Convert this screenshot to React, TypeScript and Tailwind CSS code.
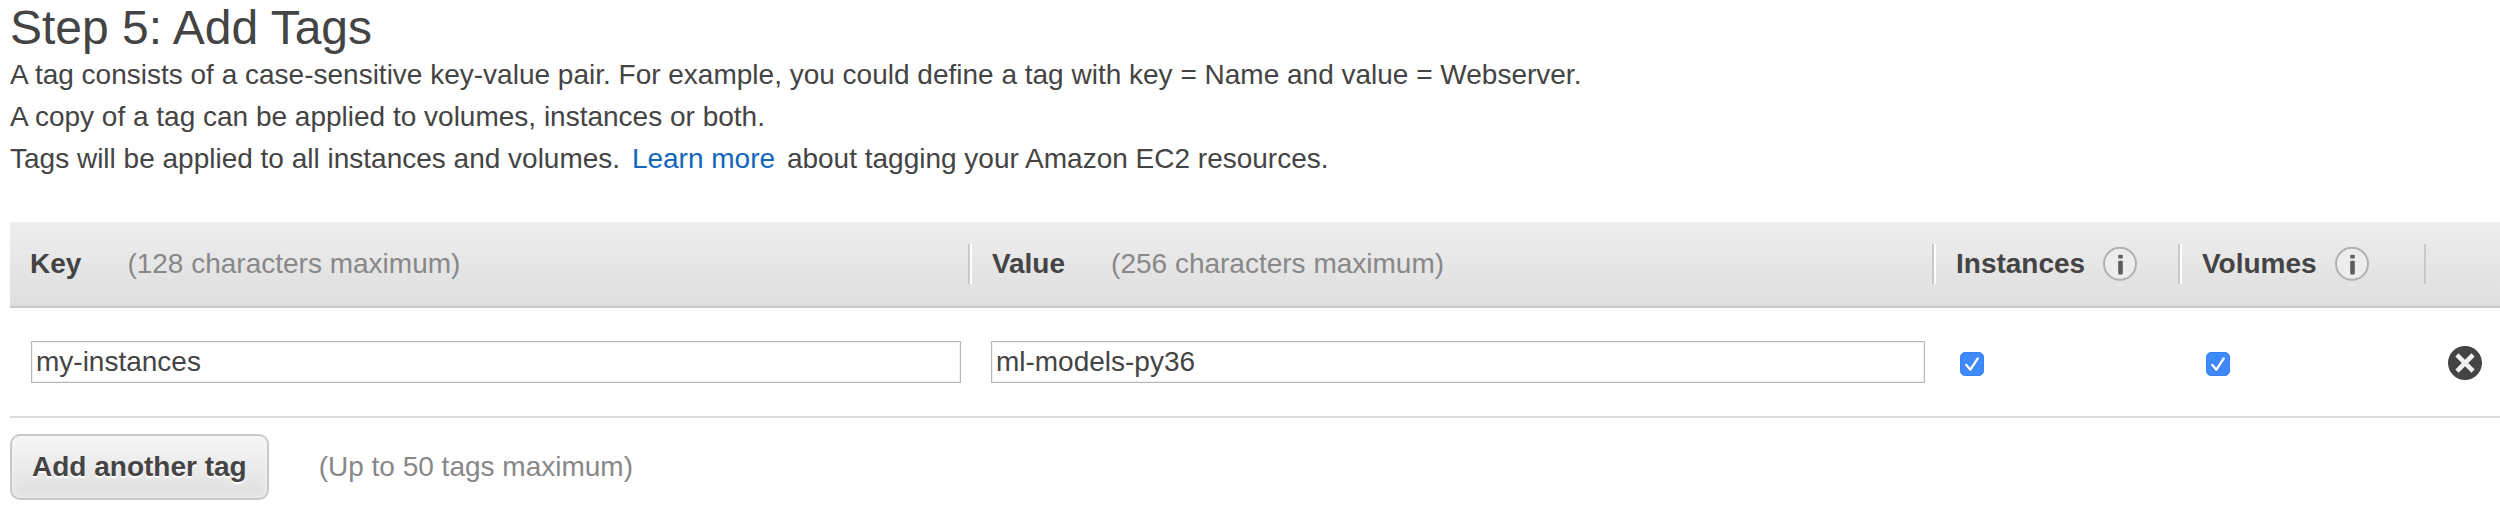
import { useState } from "react";

type Tag = { id: number; key: string; value: string; instances: boolean; volumes: boolean };

function InfoButton({ label }: { label: string }) {
  return (
    <button type="button" aria-label={label} className="shrink-0">
      <svg viewBox="0 0 34 34" className="block size-[34px]" aria-hidden="true">
        <circle cx="17" cy="16.8" r="16" fill="#ededed" stroke="#b0b0b0" strokeWidth="2" />
        <rect x="15.2" y="7.8" width="4.6" height="3.6" rx="1" fill="#606060" />
        <rect x="15.2" y="13.8" width="4.6" height="13.6" rx="1" fill="#5c5c5c" />
      </svg>
    </button>
  );
}

function CheckBox({ label, checked, onChange }: { label: string; checked: boolean; onChange: (on: boolean) => void }) {
  return (
    <label className="grid size-6 place-items-center">
      <input
        type="checkbox"
        aria-label={label}
        checked={checked}
        onChange={(e) => onChange(e.target.checked)}
        className="col-start-1 row-start-1 size-6 appearance-none rounded-[5px] border border-[#b5b5b5] bg-white checked:border-[#3a80f5] checked:bg-[#3f8afb]"
      />
      {checked && (
        <svg viewBox="0 0 24 24" className="pointer-events-none col-start-1 row-start-1 size-6" aria-hidden="true">
          <path d="M6.3 14 10.3 18.8 17.8 7.4" fill="none" stroke="#2f70da" strokeWidth="2.2" strokeLinecap="round" strokeLinejoin="round" />
          <path d="M6.3 13 10.3 17.8 17.8 6.4" fill="none" stroke="#fff" strokeWidth="2.4" strokeLinecap="round" strokeLinejoin="round" />
        </svg>
      )}
    </label>
  );
}

const fieldClass =
  "block h-[42px] w-full border border-[#b8b8b8] bg-white px-1 shadow-[inset_0_0_0_1px_#eeeeee] outline-none";

export default function App() {
  const [tags, setTags] = useState<Tag[]>([
    { id: 1, key: "my-instances", value: "ml-models-py36", instances: true, volumes: true },
  ]);
  const update = (id: number, patch: Partial<Tag>) =>
    setTags((all) => all.map((t) => (t.id === id ? { ...t, ...patch } : t)));
  const addTag = () =>
    setTags((all) => [...all, { id: Date.now(), key: "", value: "", instances: true, volumes: true }]);

  return (
    <main className="bg-white pt-0.5 pb-2.5 pl-2.5 font-['Liberation_Sans',Arial,sans-serif] text-[28px] leading-[42px] text-[#444]">
      <h1 className="text-[48px] leading-[52px]">Step 5: Add Tags</h1>
      <p>
        A tag consists of a case-sensitive key-value pair. For example, you could define a tag with key = Name and value
        = Webserver.
      </p>
      <p>A copy of a tag can be applied to volumes, instances or both.</p>
      <p>
        Tags will be applied to all instances and volumes.{" "}
        <a href="#learn-more" className="mx-1 text-[#1166bb]">
          Learn more
        </a>{" "}
        about tagging your Amazon EC2 resources.
      </p>

      <table className="mt-[42px] w-full table-fixed border-separate border-spacing-0 text-left">
        <colgroup>
          <col className="w-[38.55%]" />
          <col />
          <col className="w-[246px]" />
          <col className="w-[246px]" />
          <col className="w-[74px]" />
        </colgroup>
        <thead>
          <tr className="bg-linear-to-b from-[#eeeeee] to-[#dedede]">
            <th scope="col" className="border-b-2 border-[#c9c9c9] py-[22px] font-normal">
              <div className="flex h-10 items-center gap-[46px] border-r-2 border-[#c9c9c9] pl-5">
                <span className="font-bold">Key</span>
                <span className="text-[#888]">(128 characters maximum)</span>
              </div>
            </th>
            <th scope="col" className="border-b-2 border-[#c9c9c9] py-[22px] font-normal">
              <div className="flex h-10 items-center gap-[46px] border-r-2 border-l-2 border-r-[#c9c9c9] border-l-white pl-5">
                <span className="font-bold">Value</span>
                <span className="text-[#888]">(256 characters maximum)</span>
              </div>
            </th>
            <th scope="col" className="border-b-2 border-[#c9c9c9] py-[22px]">
              <div className="flex h-10 items-center gap-[18px] border-r-2 border-l-2 border-r-[#c9c9c9] border-l-white pl-5">
                <span>Instances</span>
                <InfoButton label="About instances" />
              </div>
            </th>
            <th scope="col" className="border-b-2 border-[#c9c9c9] py-[22px]">
              <div className="flex h-10 items-center gap-[18px] border-r-2 border-l-2 border-r-[#c9c9c9] border-l-white pl-5">
                <span>Volumes</span>
                <InfoButton label="About volumes" />
              </div>
            </th>
            <td className="border-b-2 border-[#c9c9c9]" />
          </tr>
        </thead>
        <tbody>
          {tags.map((tag) => (
            <tr key={tag.id} className="h-[110px]">
              <td className="border-b-2 border-[#dedede] pr-[9px] pl-[21px]">
                <input
                  type="text"
                  aria-label="Key"
                  maxLength={128}
                  value={tag.key}
                  onChange={(e) => update(tag.id, { key: e.target.value })}
                  className={fieldClass}
                />
              </td>
              <td className="border-b-2 border-[#dedede] pr-[9px] pl-[21px]">
                <input
                  type="text"
                  aria-label="Value"
                  maxLength={256}
                  value={tag.value}
                  onChange={(e) => update(tag.id, { value: e.target.value })}
                  className={fieldClass}
                />
              </td>
              <td className="border-b-2 border-[#dedede] pt-1 pl-[26px]">
                <CheckBox
                  label="Apply to instances"
                  checked={tag.instances}
                  onChange={(instances) => update(tag.id, { instances })}
                />
              </td>
              <td className="border-b-2 border-[#dedede] pt-1 pl-[26px]">
                <CheckBox
                  label="Apply to volumes"
                  checked={tag.volumes}
                  onChange={(volumes) => update(tag.id, { volumes })}
                />
              </td>
              <td className="border-b-2 border-[#dedede] pt-0.5 pl-[22px]">
                <button
                  type="button"
                  aria-label="Remove tag"
                  className="block"
                  onClick={() => setTags((all) => all.filter((t) => t.id !== tag.id))}
                >
                  <svg viewBox="0 0 34 34" className="block size-[34px]" aria-hidden="true">
                    <circle cx="17" cy="17" r="17" fill="#444" />
                    <path d="M10.6 10.6 23.4 23.4M23.4 10.6 10.6 23.4" stroke="#f0f0f0" strokeWidth="4.6" strokeLinecap="square" />
                  </svg>
                </button>
              </td>
            </tr>
          ))}
        </tbody>
      </table>

      <div className="mt-4 flex items-center gap-[50px]">
        <button
          type="button"
          onClick={addTag}
          className="h-[66px] rounded-[10px] border-2 border-[#c9c9c9] bg-linear-to-b from-[#f6f6f6] to-[#dfdfdf] px-5 font-bold shadow-[inset_0_0_6px_#f6f6f6] [text-shadow:0_2px_0_#fff]"
        >
          Add another tag
        </button>
        <span className="text-[#888]">(Up to 50 tags maximum)</span>
      </div>
    </main>
  );
}
